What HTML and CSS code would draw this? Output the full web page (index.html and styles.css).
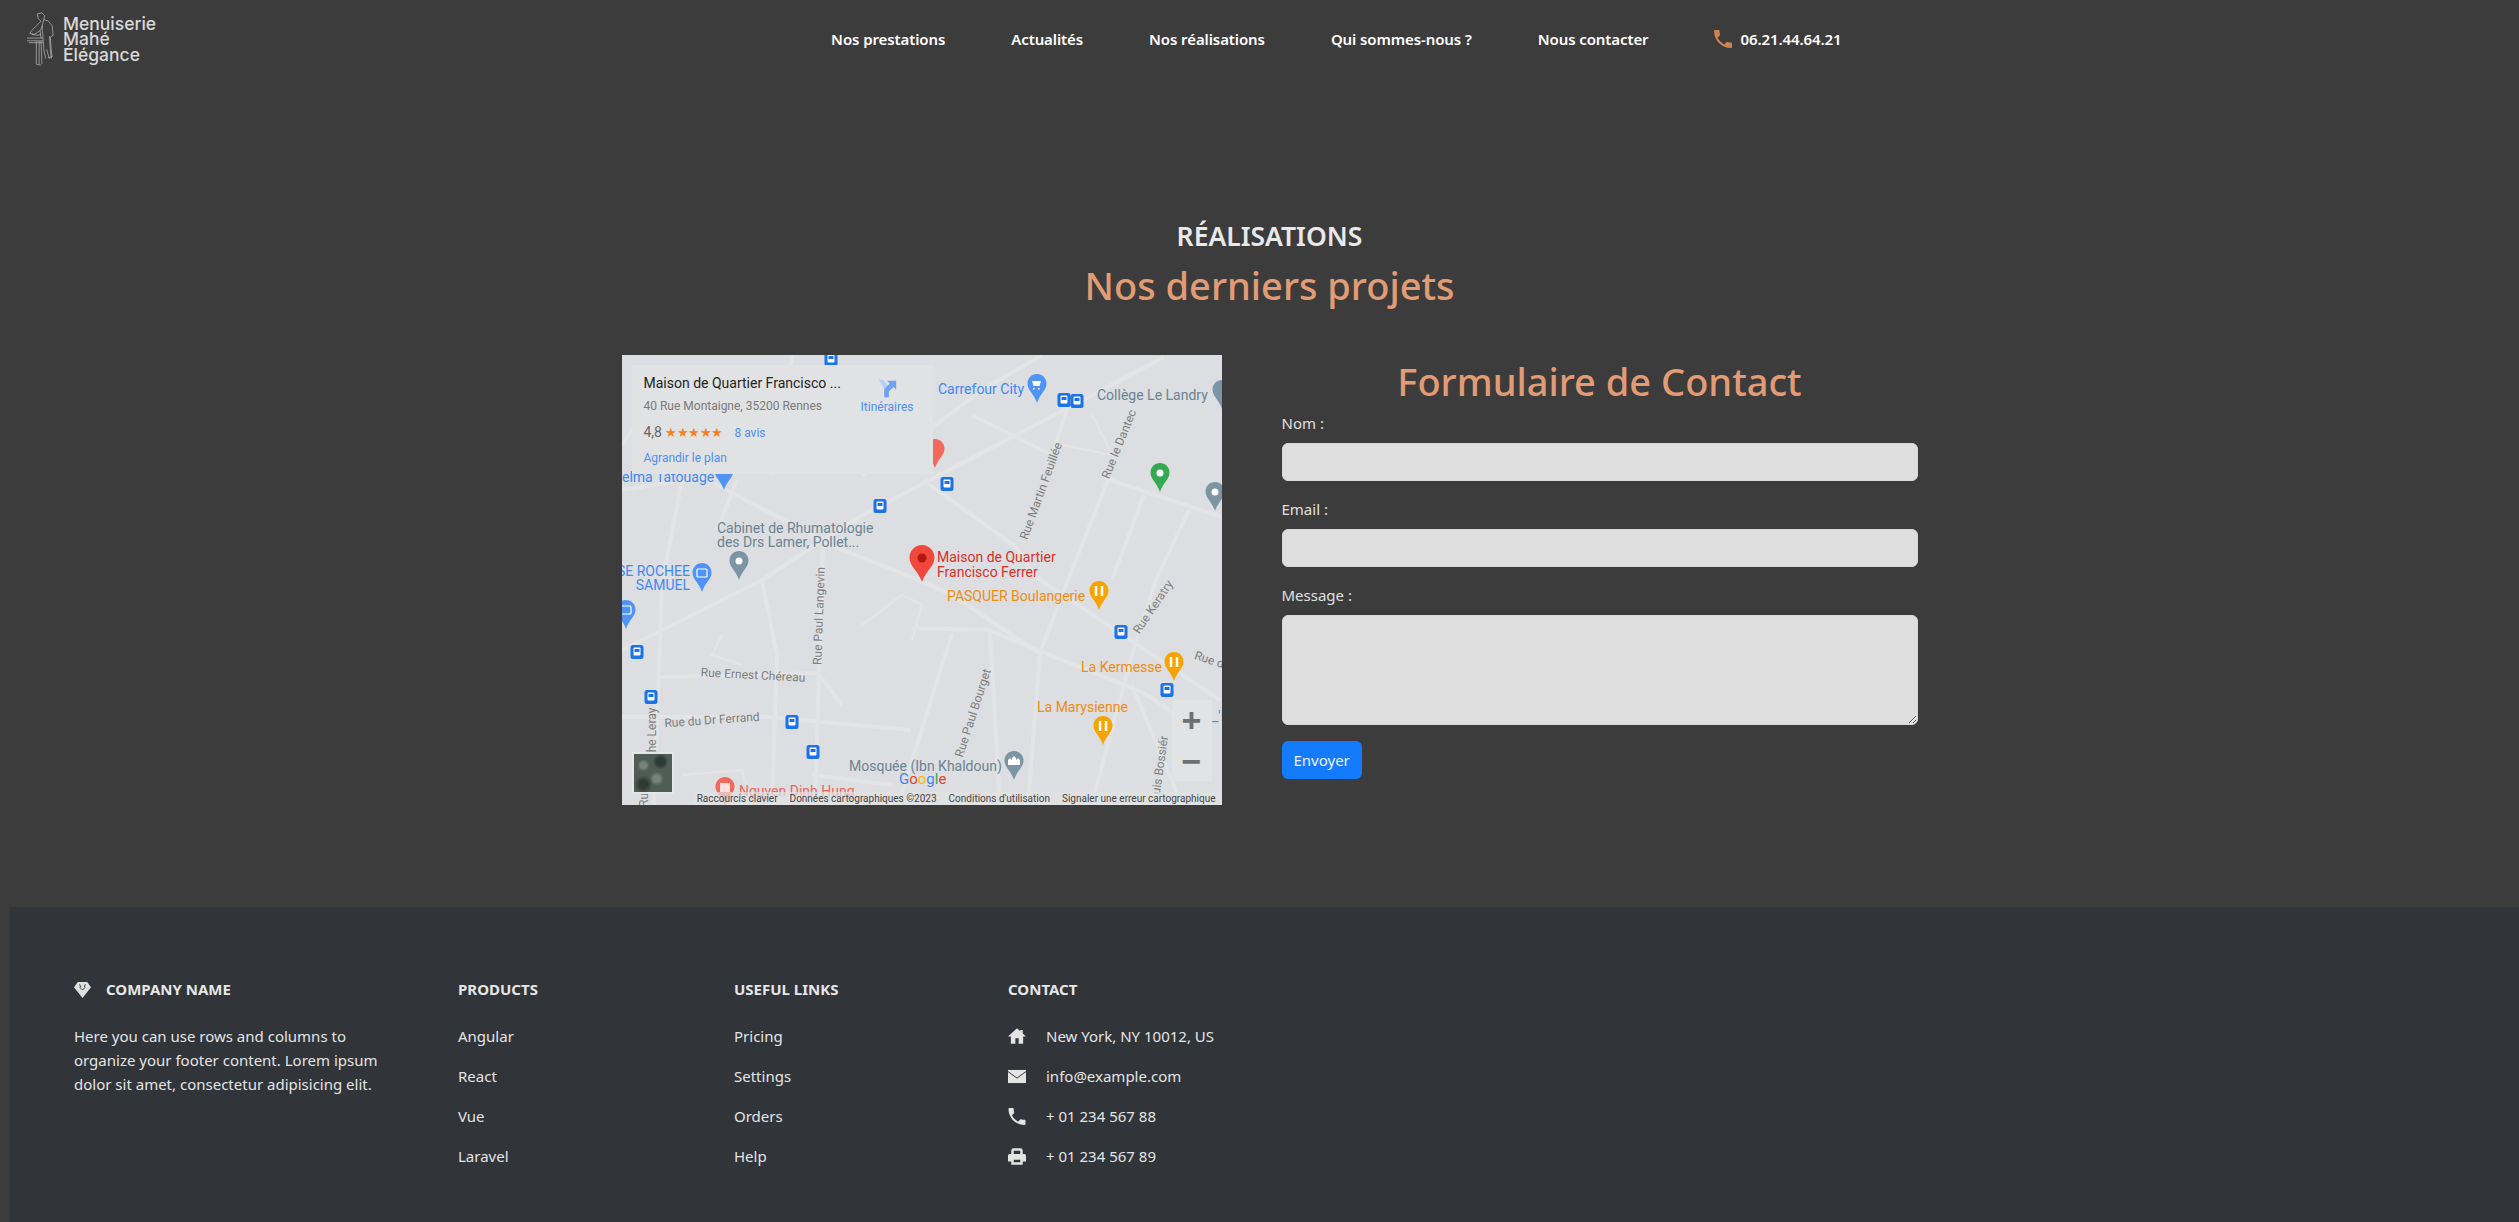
FILE: index.html
```html
<!DOCTYPE html>
<html lang="fr">
<head>
  <meta charset="UTF-8">
  <title>Menuiserie Mahé Élégance</title>
  <link rel="stylesheet" href="styles.css">
</head>
<body>
  <header class="topbar">
    <a class="logo" href="#">
      <svg class="logo-figure" viewBox="0 0 30 58" fill="none" stroke="#c4c4c4" stroke-width="0.7">
        <path d="M11 2l5-1 3 3-1 4 5 2 4 5 1 10-3 2 1 14 1 7-4 1"/>
        <path d="M11 2l1 5 3 3-5 5-5 5-2 3 5 1 6-4 3-5"/>
        <path d="M18 8l-2 8 1 10 1 14 2 10"/>
        <path d="M0 28h17M0 31h17M2 33h15"/>
        <path d="M10 31v25M13 31v25M15 31l1 25M10 56l5 1"/>
        <path d="M24 26l1 14 1 10M21 40l3 10"/>
        <path d="M5 24l6 1 4-1M14 20l1 8"/>
      </svg>
      <span class="logo-text">Menuiserie<br>Mahé<br>Élégance</span>
    </a>
    <nav class="nav">
      <a href="#">Nos prestations</a>
      <a href="#">Actualités</a>
      <a href="#">Nos réalisations</a>
      <a href="#">Qui sommes-nous ?</a>
      <a href="#">Nous contacter</a>
      <a class="nav-phone" href="#">
        <svg viewBox="3 3 18 18"><path d="M6.620 10.790c1.440 2.830 3.760 5.140 6.590 6.590l2.200-2.200c.27-.27.67-.36 1.020-.24 1.120.37 2.330.57 3.570.57.55 0 1 .45 1 1V20c0 .55-.45 1-1 1-9.390 0-17-7.610-17-17 0-.55.45-1 1-1h3.500c.55 0 1 .45 1 1 0 1.250.2 2.450.57 3.570.11.35.03.74-.25 1.020l-2.200 2.200z"/></svg>
        06.21.44.64.21
      </a>
    </nav>
  </header>

  <main class="content">
    <h3 class="kicker">RÉALISATIONS</h3>
    <h2 class="title">Nos derniers projets</h2>

    <div class="contact-row">
      <div class="map">
        <svg class="map-base" viewBox="0 0 600 450" width="600" height="450">
          <defs>
            <path id="pin" d="M0 0c-5.300 0-9.500 4.200-9.500 9.500 0 7 6.500 10 9.500 19.500 3-9.500 9.500-12.500 9.500-19.500C9.500 4.200 5.300 0 0 0z"/>
            <g id="bus">
              <rect x="-6.500" y="-7" width="13" height="14" rx="2.500" fill="#1a73e8"/>
              <rect x="-3.500" y="-4.500" width="7" height="8" rx="1" fill="#fff"/>
              <rect x="-2.500" y="-3" width="5" height="3" fill="#1a73e8"/>
            </g>
          </defs>

          <g class="roads">
            <polyline points="0,295 140,225 237,162 442,55 542,2"/>
            <polyline points="0,135 80,122 213,192 297,225 330,240 420,300"/>
            <polyline points="290,273 366,275 522,338 570,370"/>
            <polyline points="301,125 394,192 414,222 598,345"/>
            <polyline points="201,190 193,448"/>
            <polyline points="36,322 196,318 220,350"/>
            <polyline points="0,362 145,362 289,375"/>
            <polyline points="330,278 277,448"/>
            <polyline points="368,278 378,448"/>
            <polyline points="486,125 446,225 418,298 406,448"/>
            <polyline points="482,123 600,162"/>
            <polyline points="522,140 490,225"/>
            <polyline points="567,155 534,225 510,300 470,448"/>
            <polyline points="40,30 0,90"/>
            <polyline points="60,125 40,230 32,450"/>
            <polyline points="115,125 95,175"/>
            <polyline points="350,60 430,100 445,55"/>
            <polyline points="170,0 150,120"/>
            <polyline points="240,120 300,80 360,35 420,0"/>
            <polyline points="140,225 155,300 150,450"/>
            <polyline points="190,420 270,430"/>
            <polyline points="510,330 560,450"/>
            <polyline class="thin" points="100,280 90,300 120,310"/>
            <polyline class="thin" points="240,270 280,240 300,250 290,285"/>
            <polyline class="thin" points="60,420 120,415 130,450"/>
            <polyline class="thin" points="440,90 490,100 470,60"/>
          </g>

          <use href="#bus" x="209" y="4"/>
          <use href="#bus" x="442" y="45"/>
          <use href="#bus" x="455" y="46"/>
          <use href="#bus" x="325" y="129"/>
          <use href="#bus" x="258" y="151"/>
          <use href="#bus" x="15" y="297"/>
          <use href="#bus" x="499" y="277"/>
          <use href="#bus" x="29" y="342"/>
          <use href="#bus" x="170" y="367"/>
          <use href="#bus" x="191" y="397"/>
          <use href="#bus" x="545" y="335"/>

          <use href="#pin" x="313" y="84" fill="#f4675c"/>
          <use href="#pin" x="415" y="19" fill="#4f94f5"/>
          <path d="M410 26h9l-1.500 5h-6zM411 33h1.500v1.500H411zM416 33h1.500v1.500H416z" fill="#fff"/>
          <use href="#pin" x="600" y="25" fill="#7b95a5"/>
          <use href="#pin" x="538" y="108" fill="#34a853"/>
          <circle cx="538" cy="118" r="3.500" fill="#fff"/>
          <use href="#pin" x="593" y="127" fill="#7b95a5"/>
          <circle cx="593" cy="137" r="3.500" fill="#fff"/>
          <use href="#pin" x="102" y="106" fill="#4f94f5"/>
          <use href="#pin" x="117" y="196" fill="#7b95a5"/>
          <circle cx="117" cy="206" r="3.500" fill="#fff"/>
          <use href="#pin" x="80" y="208" fill="#4f94f5"/>
          <rect x="75" y="214" width="10" height="8" rx="1" fill="none" stroke="#fff" stroke-width="1.200"/>
          <use href="#pin" x="4" y="245" fill="#4f94f5"/>
          <rect x="-1" y="251" width="10" height="8" rx="1" fill="none" stroke="#fff" stroke-width="1.200"/>
          <use href="#pin" x="477" y="226" fill="#f7a400"/>
          <path d="M474 231v10M480 231v10" stroke="#fff" stroke-width="2.500"/>
          <use href="#pin" x="552" y="297" fill="#f7a400"/>
          <path d="M549 302v10M555 302v10" stroke="#fff" stroke-width="2.500"/>
          <use href="#pin" x="481" y="361" fill="#f7a400"/>
          <path d="M478 366v10M484 366v10" stroke="#fff" stroke-width="2.500"/>
          <use href="#pin" x="392" y="396" fill="#7b95a5"/>
          <path d="M386 410v-5l2-2 2 2v5zM390 410v-7l2-2 2 2v7zM394 410v-5l2-2 2 2v5z" fill="#fff"/>
          <use href="#pin" x="103" y="422" fill="#f4675c"/>
          <rect x="98" y="428" width="10" height="9" fill="#fff" opacity=".8"/>

          <g class="m-blue">
            <text x="316" y="39">Carrefour City</text>
            <text x="0" y="127">elma Tatouage</text>
            <text x="68" y="221" text-anchor="end">SE ROCHEE</text>
            <text x="68" y="235" text-anchor="end">SAMUEL</text>
            <text x="590" y="366">_'E</text>
          </g>
          <g class="m-slate">
            <text x="475" y="45">Collège Le Landry</text>
            <text x="95" y="178">Cabinet de Rhumatologie</text>
            <text x="95" y="192">des Drs Lamer, Pollet...</text>
            <text x="227" y="416">Mosquée (Ibn Khaldoun)</text>
          </g>
          <g class="m-orange">
            <text x="325" y="246">PASQUER Boulangerie</text>
            <text x="459" y="317">La Kermesse</text>
            <text x="415" y="357">La Marysienne</text>
          </g>
          <g class="m-red">
            <text x="315" y="207">Maison de Quartier</text>
            <text x="315" y="222">Francisco Ferrer</text>
          </g>
          <text class="m-pink" x="117" y="441">Nguyen Dinh Hung</text>

          <g class="m-street">
            <text transform="translate(419 136) rotate(-70)" text-anchor="middle" y="4">Rue Martin Feuillée</text>
            <text transform="translate(497 89) rotate(-68)" text-anchor="middle" y="4">Rue le Dantec</text>
            <text transform="translate(197 261) rotate(-88)" text-anchor="middle" y="4">Rue Paul Langevin</text>
            <text transform="translate(531 252) rotate(-56)" text-anchor="middle" y="4">Rue Keratry</text>
            <text transform="translate(573 300) rotate(18)" y="4">Rue de</text>
            <text transform="translate(131 320) rotate(3)" text-anchor="middle" y="4">Rue Ernest Chéreau</text>
            <text transform="translate(90 365) rotate(-4)" text-anchor="middle" y="4">Rue du Dr Ferrand</text>
            <text transform="translate(351 358) rotate(-72)" text-anchor="middle" y="4">Rue Paul Bourget</text>
            <text transform="translate(30 375) rotate(-90)" text-anchor="middle" y="4">he Leray</text>
            <text transform="translate(22 445) rotate(-90)" text-anchor="middle" y="4">Ru</text>
            <text transform="translate(538 410) rotate(-82)" text-anchor="middle" y="4">uis Bossiér</text>
          </g>

          <path d="M300 190c-6.900 0-12.500 5.600-12.500 12.500 0 9 8.500 13 12.500 24.500 4-11.500 12.500-15.500 12.500-24.500 0-6.900-5.600-12.500-12.500-12.500z" fill="#f2473c"/>
          <circle cx="300" cy="203" r="4.500" fill="#b3170f"/>

          <text class="m-google" x="277" y="429"><tspan fill="#4285f4">G</tspan><tspan fill="#ea4335">o</tspan><tspan fill="#fbbc05">o</tspan><tspan fill="#4285f4">g</tspan><tspan fill="#34a853">l</tspan><tspan fill="#ea4335">e</tspan></text>
        </svg>

        <div class="place-card">
          <div class="place-info">
            <div class="place-name">Maison de Quartier Francisco ...</div>
            <div class="place-address">40 Rue Montaigne, 35200 Rennes</div>
            <div class="place-rating">4,8 <span class="stars">★★★★★</span> <a href="#">8 avis</a></div>
            <a class="place-link" href="#">Agrandir le plan</a>
          </div>
          <a class="directions" href="#">
            <svg viewBox="0 0 24 24" width="22" height="22">
              <path d="M3 3h5l6 8v11h-5V13z" fill="#b5d0f7"/>
              <path d="M9 22V13l6-6-3-3h10v10l-3-3-5 5v6z" fill="#6ea2f5"/>
            </svg>
            Itinéraires
          </a>
        </div>

        <div class="satellite"></div>
        <div class="zoom-ctrl">
          <span>+</span>
          <span>−</span>
        </div>
        <div class="attribution">
          <span>Raccourcis clavier</span>
          <span>Données cartographiques ©2023</span>
          <span>Conditions d'utilisation</span>
          <span>Signaler une erreur cartographique</span>
        </div>
      </div>

      <form class="contact-form">
        <h2 class="form-title">Formulaire de Contact</h2>
        <label for="nom">Nom :</label>
        <input type="text" id="nom">
        <label for="email">Email :</label>
        <input type="text" id="email">
        <label for="message">Message :</label>
        <textarea id="message"></textarea>
        <button type="button">Envoyer</button>
      </form>
    </div>
  </main>

  <footer class="footer">
    <div class="footer-col">
      <h6>
        <svg class="gem" viewBox="0 0 18 18"><path d="M4 1h10l4 5.500L9 18 0 6.500z" fill="#e0e0e0"/><path d="M6 6.500l3 3 3-3M6 3.500l1 3M12 3.500l-1 3" fill="none" stroke="#313439" stroke-width="1"/></svg>
        COMPANY NAME
      </h6>
      <p>Here you can use rows and columns to organize your footer content. Lorem ipsum dolor sit amet, consectetur adipisicing elit.</p>
    </div>
    <div class="footer-col">
      <h6>PRODUCTS</h6>
      <p>Angular</p>
      <p>React</p>
      <p>Vue</p>
      <p>Laravel</p>
    </div>
    <div class="footer-col">
      <h6>USEFUL LINKS</h6>
      <p>Pricing</p>
      <p>Settings</p>
      <p>Orders</p>
      <p>Help</p>
    </div>
    <div class="footer-col">
      <h6>CONTACT</h6>
      <p class="contact-item">
        <svg viewBox="1 2 22 20"><path d="M10 21v-7h4v7h5.500v-9H23l-4-3.600V4h-3v1.700L12 2 1 12h3.500v9z"/></svg>
        New York, NY 10012, US
      </p>
      <p class="contact-item">
        <svg viewBox="1 2 22 20"><path d="M1 4h22v16H1z"/><path class="crease" d="M1 6l11 8 11-8"/></svg>
        info@example.com
      </p>
      <p class="contact-item">
        <svg viewBox="3 3 18 18"><path d="M6.620 10.790c1.440 2.830 3.760 5.140 6.590 6.590l2.200-2.200c.27-.27.67-.36 1.020-.24 1.120.37 2.330.57 3.570.57.55 0 1 .45 1 1V20c0 .55-.45 1-1 1-9.390 0-17-7.610-17-17 0-.55.45-1 1-1h3.500c.55 0 1 .45 1 1 0 1.250.2 2.450.57 3.570.11.35.03.74-.25 1.020l-2.200 2.200z"/></svg>
        + 01 234 567 88
      </p>
      <p class="contact-item">
        <svg viewBox="1 2 22 20"><path fill-rule="evenodd" d="M5 9V5a3 3 0 0 1 3-3h8a3 3 0 0 1 3 3v4h2a2 2 0 0 1 2 2v7h-4v4H5v-4H1v-7a2 2 0 0 1 2-2zm3-4v4h8V5zm0 11v3h8v-3z"/></svg>
        + 01 234 567 89
      </p>
    </div>
  </footer>
</body>
</html>
```

FILE: styles.css
```css
* {
  box-sizing: border-box;
}

html, body {
  margin: 0;
  padding: 0;
  height: 1222px;
  overflow: hidden;
  background: #3c3c3c;
  font-family: "Noto Sans", "Open Sans", sans-serif;
  font-size: 16px;
  line-height: 24px;
  color: #e4e4e4;
}

a {
  color: inherit;
  text-decoration: none;
}

/* header */
.topbar {
  display: flex;
  align-items: center;
  height: 80px;
  padding: 0 0 2px 27px;
}

.logo {
  display: flex;
  align-items: center;
  gap: 8px;
  color: #d9d9d9;
}

.logo-figure {
  width: 28px;
  height: 56px;
}

.logo-text {
  font-family: Inter, sans-serif;
  font-size: 17.5px;
  font-weight: 500;
  line-height: 15.5px;
}

.nav {
  display: flex;
  align-items: center;
  gap: 66px;
  margin-left: 675px;
  font-size: 15px;
  font-weight: 600;
  letter-spacing: -0.1px;
  color: #fff;
}

.nav-phone {
  display: flex;
  align-items: center;
  gap: 8px;
}

.nav-phone svg {
  width: 18px;
  height: 18px;
  fill: #cf8350;
}

/* middle */
.content {
  display: flex;
  flex-direction: column;
  align-items: center;
  height: 827px;
  margin-left: 20px;
  padding-top: 139px;
}

.kicker {
  margin: 0 0 8px;
  font-size: 26.5px;
  line-height: 34px;
  font-weight: 600;
  color: #e9e9e9;
}

.title {
  margin: 0 0 46px;
  font-size: 38px;
  line-height: 48px;
  font-weight: 500;
  color: #e29c75;
}

.contact-row {
  display: flex;
  gap: 60px;
}

.map {
  position: relative;
  width: 600px;
  height: 450px;
  overflow: hidden;
  background: #dcdee1;
  font-family: Roboto, sans-serif;
}

.map-base {
  display: block;
  font-size: 14px;
}

.roads polyline {
  fill: none;
  stroke: #e3e4e5;
  stroke-width: 4;
}

.roads .thin {
  stroke-width: 2.5;
}

.m-blue { fill: #3f88f5; }
.m-slate { fill: #6b8494; }
.m-orange { fill: #ee8d12; }
.m-red { fill: #d8302a; }
.m-pink { fill: #f0655c; }

.m-street {
  fill: #7c7e80;
  font-size: 12px;
}

.m-google {
  font-size: 15px;
}

.place-card {
  position: absolute;
  top: 10px;
  left: 10px;
  display: flex;
  justify-content: space-between;
  width: 301px;
  height: 109px;
  padding: 8px 19px 0 12px;
  background: #e1e2e3;
}

.place-name {
  font-size: 14px;
  line-height: 20px;
  color: #222;
  white-space: nowrap;
}

.place-address {
  margin-top: 5px;
  font-size: 12px;
  line-height: 16px;
  color: #7a7a7a;
  white-space: nowrap;
}

.place-rating {
  margin-top: 8px;
  font-size: 14px;
  line-height: 20px;
  color: #666;
}

.place-rating a {
  margin-left: 8px;
  font-size: 12px;
  color: #4f8ff5;
}

.stars {
  font-size: 12.5px;
  letter-spacing: -0.5px;
  color: #f4801f;
}

.place-link {
  display: block;
  margin-top: 7px;
  font-size: 12px;
  line-height: 16px;
  color: #4f8ff5;
}

.directions {
  display: flex;
  flex-direction: column;
  align-items: center;
  margin-top: 4px;
  font-size: 12px;
  line-height: 16px;
  color: #4f8ff5;
}

.satellite {
  position: absolute;
  left: 10px;
  bottom: 11px;
  width: 42px;
  height: 42px;
  border: 2px solid #e6e6e6;
  background:
    radial-gradient(circle at 25% 30%, #76857a 0 3px, transparent 6px),
    radial-gradient(circle at 70% 20%, #2f3a36 0 4px, transparent 8px),
    radial-gradient(circle at 60% 65%, #77867c 0 3px, transparent 7px),
    radial-gradient(circle at 25% 80%, #2f3a36 0 4px, transparent 9px),
    #4f5d56;
}

.zoom-ctrl {
  position: absolute;
  top: 345px;
  left: 550px;
  display: flex;
  flex-direction: column;
  width: 40px;
  height: 81px;
  background: #e2e3e4;
  color: #6f6f6f;
  font-family: "Liberation Sans", sans-serif;
  font-size: 34px;
  font-weight: 700;
  line-height: 40px;
  text-align: center;
}

.zoom-ctrl span {
  flex: 1;
}

.attribution {
  position: absolute;
  right: 0;
  bottom: 0;
  display: flex;
  gap: 12px;
  height: 13px;
  padding: 0 6px 0 4px;
  background: rgba(225, 226, 227, 0.7);
  font-size: 10px;
  line-height: 13px;
  color: #444;
  white-space: nowrap;
}

.contact-form {
  display: flex;
  flex-direction: column;
  align-items: flex-start;
  width: 636px;
}

.form-title {
  width: 100%;
  margin: 2px 0 6px;
  font-size: 38px;
  line-height: 48px;
  font-weight: 500;
  text-align: center;
  color: #e29c75;
}

.contact-form label {
  margin-bottom: 8px;
  font-size: 15px;
  color: #e0e0e0;
}

.contact-form input,
.contact-form textarea {
  display: block;
  width: 100%;
  height: 38px;
  margin: 0 0 16px;
  border: 1px solid #d8d8d8;
  border-radius: 6px;
  background: #dfdfdf;
}

.contact-form textarea {
  height: 110px;
}

.contact-form button {
  height: 38px;
  padding: 0 12px;
  border: 0;
  border-radius: 6px;
  background: #147bfd;
  font-family: inherit;
  font-size: 15px;
  color: #f2f2f2;
}

/* footer */
.footer {
  display: grid;
  grid-template-columns: 384px 276px 274px 1fr;
  height: 315px;
  margin-left: 10px;
  padding: 72px 0 0 64px;
  background: #313439;
  font-size: 15px;
}

.footer-col {
  width: 320px;
}

.footer h6 {
  display: flex;
  align-items: center;
  margin: 0 0 25px;
  font-size: 15px;
  line-height: 20px;
  font-weight: 700;
  color: #e6e6e6;
}

.footer p {
  margin: 0 0 16px;
  color: #e4e4e4;
}

.gem {
  width: 17px;
  height: 17px;
  margin-right: 15px;
}

.contact-item {
  display: flex;
  align-items: center;
  gap: 20px;
}

.contact-item svg {
  width: 18px;
  height: 17px;
  fill: #e4e4e4;
}

.crease {
  fill: none;
  stroke: #313439;
  stroke-width: 1.2;
}
```
